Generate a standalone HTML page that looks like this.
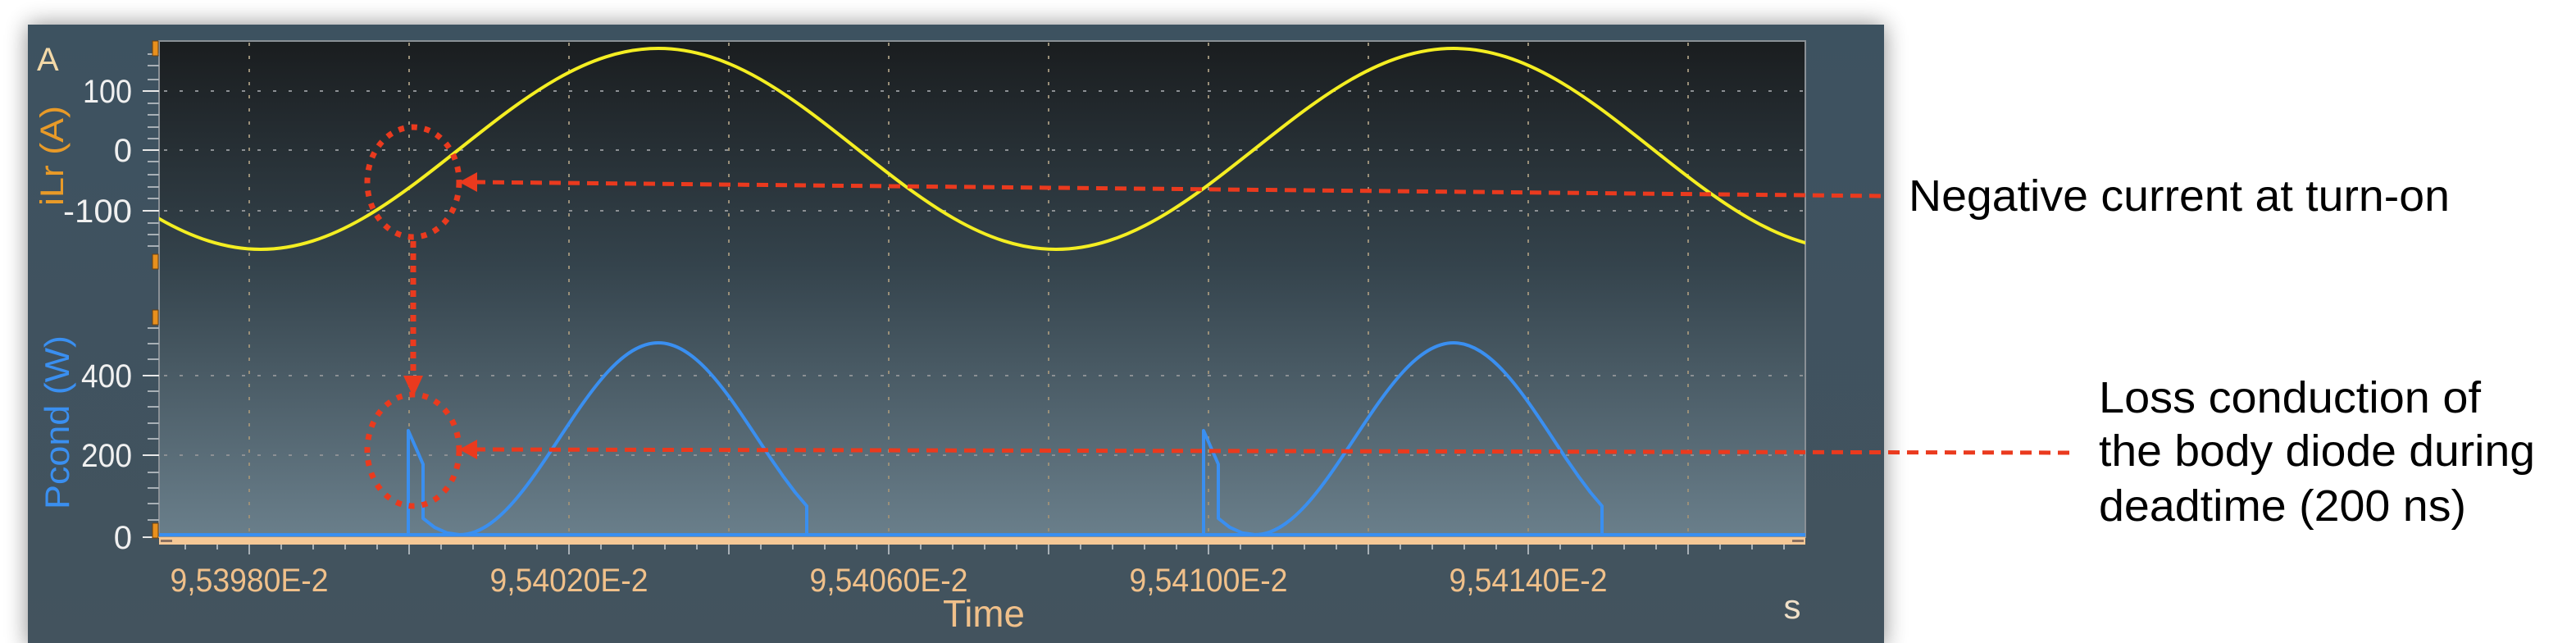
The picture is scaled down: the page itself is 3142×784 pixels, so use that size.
<!DOCTYPE html>
<html><head><meta charset="utf-8"><style>
html,body{margin:0;padding:0;background:#fff;}
body{width:3142px;height:784px;overflow:hidden;}
svg{display:block;}
text{font-family:"Liberation Sans",sans-serif;}
</style></head><body>
<svg width="3142" height="784" viewBox="0 0 3142 784" xmlns="http://www.w3.org/2000/svg">
<defs>
<linearGradient id="pan" x1="0" y1="0" x2="0" y2="1"><stop offset="0" stop-color="#3d5260"/><stop offset="1" stop-color="#43535e"/></linearGradient>
<linearGradient id="plot" x1="0" y1="0" x2="0" y2="1"><stop offset="0" stop-color="#1a1d1f"/><stop offset="0.45" stop-color="#34434c"/><stop offset="1" stop-color="#6a7f8b"/></linearGradient>
<filter id="sh" x="-5%" y="-20%" width="110%" height="140%"><feGaussianBlur stdDeviation="14"/></filter>
<clipPath id="pc"><rect x="194" y="50" width="2008" height="605"/></clipPath>
</defs>
<rect x="34" y="30" width="2264" height="760" fill="#000" opacity="0.45" filter="url(#sh)"/>
<rect x="34" y="30" width="2264" height="760" fill="url(#pan)"/>
<rect x="194" y="50" width="2008" height="605" fill="url(#plot)" stroke="#8a9096" stroke-width="2"/>
<g stroke="#9a8f78" stroke-width="2" stroke-dasharray="4,12">
<line x1="304" y1="52" x2="304" y2="652"/><line x1="499" y1="52" x2="499" y2="652"/><line x1="694" y1="52" x2="694" y2="652"/><line x1="889" y1="52" x2="889" y2="652"/><line x1="1084" y1="52" x2="1084" y2="652"/><line x1="1279" y1="52" x2="1279" y2="652"/><line x1="1474" y1="52" x2="1474" y2="652"/><line x1="1669" y1="52" x2="1669" y2="652"/><line x1="1864" y1="52" x2="1864" y2="652"/><line x1="2059" y1="52" x2="2059" y2="652"/>
</g>
<g stroke="#8c9094" stroke-width="2" stroke-dasharray="4,15">
<line x1="200" y1="111" x2="2200" y2="111"/><line x1="200" y1="183" x2="2200" y2="183"/><line x1="200" y1="257" x2="2200" y2="257"/><line x1="200" y1="458" x2="2200" y2="458"/><line x1="200" y1="555" x2="2200" y2="555"/>
</g>
<g stroke="#a8b0b6" stroke-width="2">
<line x1="180" y1="66" x2="194" y2="66"/><line x1="180" y1="80" x2="194" y2="80"/><line x1="180" y1="97" x2="194" y2="97"/><line x1="174" y1="111" x2="194" y2="111" stroke="#e8e8e8"/><line x1="180" y1="126" x2="194" y2="126"/><line x1="180" y1="140" x2="194" y2="140"/><line x1="180" y1="155" x2="194" y2="155"/><line x1="180" y1="169" x2="194" y2="169"/><line x1="174" y1="183" x2="194" y2="183" stroke="#e8e8e8"/><line x1="180" y1="197" x2="194" y2="197"/><line x1="180" y1="213" x2="194" y2="213"/><line x1="180" y1="228" x2="194" y2="228"/><line x1="180" y1="242" x2="194" y2="242"/><line x1="174" y1="257" x2="194" y2="257" stroke="#e8e8e8"/><line x1="180" y1="272" x2="194" y2="272"/><line x1="180" y1="286" x2="194" y2="286"/><line x1="180" y1="300" x2="194" y2="300"/>
<line x1="180" y1="400" x2="194" y2="400"/><line x1="180" y1="419" x2="194" y2="419"/><line x1="180" y1="438" x2="194" y2="438"/><line x1="174" y1="458" x2="194" y2="458" stroke="#e8e8e8"/><line x1="180" y1="477" x2="194" y2="477"/><line x1="180" y1="496" x2="194" y2="496"/><line x1="180" y1="516" x2="194" y2="516"/><line x1="180" y1="535" x2="194" y2="535"/><line x1="174" y1="555" x2="194" y2="555" stroke="#e8e8e8"/><line x1="180" y1="576" x2="194" y2="576"/><line x1="180" y1="595" x2="194" y2="595"/><line x1="180" y1="614" x2="194" y2="614"/><line x1="180" y1="634" x2="194" y2="634"/><line x1="174" y1="655" x2="194" y2="655" stroke="#e8e8e8"/>
</g>
<g fill="#e8901e" stroke="#6a4010" stroke-width="1"><rect x="186" y="50" width="7" height="18"/><rect x="186" y="310" width="7" height="18"/><rect x="186" y="378" width="7" height="18"/><rect x="186" y="638" width="7" height="18"/></g>
<rect x="194" y="655" width="2008" height="9" fill="#f5c896"/>
<rect x="196" y="658" width="14" height="3" fill="#8a7060"/><rect x="2186" y="658" width="14" height="3" fill="#8a7060"/>
<g stroke="#a8b0b6" stroke-width="2">
<line x1="226" y1="664" x2="226" y2="670"/><line x1="265" y1="664" x2="265" y2="670"/><line x1="304" y1="664" x2="304" y2="676"/><line x1="343" y1="664" x2="343" y2="670"/><line x1="382" y1="664" x2="382" y2="670"/><line x1="421" y1="664" x2="421" y2="670"/><line x1="460" y1="664" x2="460" y2="670"/><line x1="499" y1="664" x2="499" y2="676"/><line x1="538" y1="664" x2="538" y2="670"/><line x1="577" y1="664" x2="577" y2="670"/><line x1="616" y1="664" x2="616" y2="670"/><line x1="655" y1="664" x2="655" y2="670"/><line x1="694" y1="664" x2="694" y2="676"/><line x1="733" y1="664" x2="733" y2="670"/><line x1="772" y1="664" x2="772" y2="670"/><line x1="811" y1="664" x2="811" y2="670"/><line x1="850" y1="664" x2="850" y2="670"/><line x1="889" y1="664" x2="889" y2="676"/><line x1="928" y1="664" x2="928" y2="670"/><line x1="967" y1="664" x2="967" y2="670"/><line x1="1006" y1="664" x2="1006" y2="670"/><line x1="1045" y1="664" x2="1045" y2="670"/><line x1="1084" y1="664" x2="1084" y2="676"/><line x1="1123" y1="664" x2="1123" y2="670"/><line x1="1162" y1="664" x2="1162" y2="670"/><line x1="1201" y1="664" x2="1201" y2="670"/><line x1="1240" y1="664" x2="1240" y2="670"/><line x1="1279" y1="664" x2="1279" y2="676"/><line x1="1318" y1="664" x2="1318" y2="670"/><line x1="1357" y1="664" x2="1357" y2="670"/><line x1="1396" y1="664" x2="1396" y2="670"/><line x1="1435" y1="664" x2="1435" y2="670"/><line x1="1474" y1="664" x2="1474" y2="676"/><line x1="1513" y1="664" x2="1513" y2="670"/><line x1="1552" y1="664" x2="1552" y2="670"/><line x1="1591" y1="664" x2="1591" y2="670"/><line x1="1630" y1="664" x2="1630" y2="670"/><line x1="1669" y1="664" x2="1669" y2="676"/><line x1="1708" y1="664" x2="1708" y2="670"/><line x1="1747" y1="664" x2="1747" y2="670"/><line x1="1786" y1="664" x2="1786" y2="670"/><line x1="1825" y1="664" x2="1825" y2="670"/><line x1="1864" y1="664" x2="1864" y2="676"/><line x1="1903" y1="664" x2="1903" y2="670"/><line x1="1942" y1="664" x2="1942" y2="670"/><line x1="1981" y1="664" x2="1981" y2="670"/><line x1="2020" y1="664" x2="2020" y2="670"/><line x1="2059" y1="664" x2="2059" y2="676"/><line x1="2098" y1="664" x2="2098" y2="670"/><line x1="2137" y1="664" x2="2137" y2="670"/><line x1="2176" y1="664" x2="2176" y2="670"/>
</g>
<g clip-path="url(#pc)" fill="none" stroke-linejoin="round">
<path stroke="#f4ee22" stroke-width="4" d="M75.5,181.5 C154.6,244.3 230.2,304 318,304 C405.8,304 481.4,244.3 560.5,181.5 C639.6,118.7 715.2,59 803,59 C890.8,59 966.4,118.7 1045.5,181.5 C1124.6,244.3 1200.2,304 1288,304 C1375.8,304 1451.4,244.3 1530.5,181.5 C1609.6,118.7 1685.2,59 1773,59 C1860.8,59 1936.4,118.7 2015.5,181.5 C2094.6,244.3 2170.2,304 2258,304"/>
<line x1="194" y1="652" x2="2202" y2="652" stroke="#3a8ff0" stroke-width="4"/>
<path id="pulse" stroke="#3a8ff0" stroke-width="4" d="M498,652 L498,525 L516,566 L516,632 L530,643 L545,649.7 L560.5,652 C604.35,652 642.25,594.9 681.75,535 C721.25,475.1 759.15,418 803,418 C846.85,418 884.75,475.1 924.25,535 L940,558.8 L955,580.4 L970,600.5 L984,617 L984,652"/>
<use href="#pulse" transform="translate(970,0)"/>
</g>
<g fill="#f0f0f0" font-size="40" text-anchor="end" lengthAdjust="spacingAndGlyphs">
<text x="161" y="125" textLength="60" lengthAdjust="spacingAndGlyphs">100</text><text x="161" y="197">0</text><text x="161" y="271" textLength="84" lengthAdjust="spacingAndGlyphs">-100</text><text x="161" y="472" textLength="62" lengthAdjust="spacingAndGlyphs">400</text><text x="161" y="569" textLength="62" lengthAdjust="spacingAndGlyphs">200</text><text x="161" y="669">0</text>
</g>
<text x="45" y="86" font-size="40" fill="#f3d9a8">A</text>
<text transform="translate(77,190) rotate(-90)" font-size="40" fill="#e89a28" text-anchor="middle" textLength="122" lengthAdjust="spacingAndGlyphs">iLr (A)</text>
<text transform="translate(84,515) rotate(-90)" font-size="42" fill="#3a8ff0" text-anchor="middle" textLength="212" lengthAdjust="spacingAndGlyphs">Pcond (W)</text>
<g fill="#f0c08a" font-size="40" text-anchor="middle">
<text x="304" y="721" textLength="193" lengthAdjust="spacingAndGlyphs">9,53980E-2</text><text x="694" y="721" textLength="193" lengthAdjust="spacingAndGlyphs">9,54020E-2</text><text x="1084" y="721" textLength="193" lengthAdjust="spacingAndGlyphs">9,54060E-2</text><text x="1474" y="721" textLength="193" lengthAdjust="spacingAndGlyphs">9,54100E-2</text><text x="1864" y="721" textLength="193" lengthAdjust="spacingAndGlyphs">9,54140E-2</text>
</g>
<text x="1200" y="764" font-size="46" fill="#f0c08a" text-anchor="middle" textLength="100" lengthAdjust="spacingAndGlyphs">Time</text>
<text x="2186" y="754" font-size="42" fill="#f0e0c8" text-anchor="middle">s</text>
<g fill="none" stroke="#ea3a1e" stroke-width="7">
<ellipse cx="504" cy="222" rx="56" ry="67" stroke-dasharray="7,9"/>
<ellipse cx="504" cy="549" rx="56" ry="68" stroke-dasharray="7,9"/>
<line x1="504" y1="294" x2="504" y2="462" stroke-dasharray="8,7"/>
<line x1="578" y1="222" x2="2300" y2="239" stroke-width="5" stroke-dasharray="14,9"/>
<line x1="578" y1="548" x2="2530" y2="552" stroke-width="5" stroke-dasharray="14,9"/>
</g>
<g fill="#ea3a1e">
<polygon points="492,458 516,458 504,484"/>
<polygon points="560,222 582,210 582,234"/>
<polygon points="560,548 582,536 582,560"/>
</g>
<text x="2328" y="257" font-size="54" fill="#000" textLength="660" lengthAdjust="spacingAndGlyphs">Negative current at turn-on</text>
<text x="2560" y="503" font-size="54" fill="#000" textLength="466" lengthAdjust="spacingAndGlyphs">Loss conduction of</text>
<text x="2560" y="568" font-size="54" fill="#000" textLength="532" lengthAdjust="spacingAndGlyphs">the body diode during</text>
<text x="2560" y="635" font-size="54" fill="#000" textLength="448" lengthAdjust="spacingAndGlyphs">deadtime (200 ns)</text>
</svg>
</body></html>
